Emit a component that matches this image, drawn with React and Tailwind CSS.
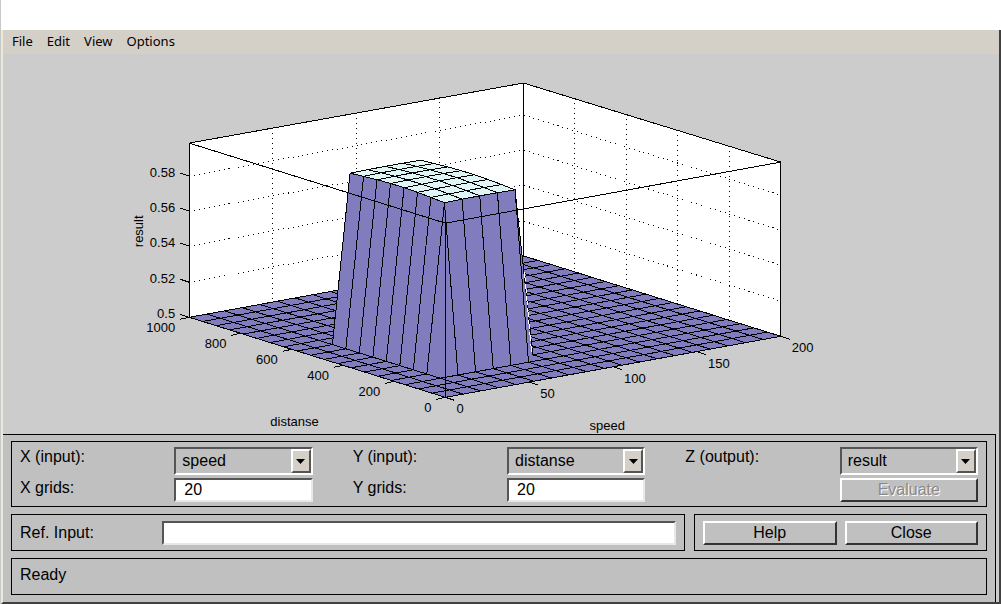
import React, { useState } from 'react';

// Screen coordinates of the axes box
const FRONT = [445, 397];
const LEFT = [189, 317];
const RIGHT = [780, 336];
const BACK = [523, 256];
const BOX_H = 174;
const CELLS = 19;

const up = ([x, y], h) => [x, y - h];
const mix = (a, b, t) => [a[0] + (b[0] - a[0]) * t, a[1] + (b[1] - a[1]) * t];
const pts = (list) => list.map(([x, y]) => `${Math.round(x * 10) / 10},${Math.round(y * 10) / 10}`).join(' ');

// Surface height in pixels, i runs along speed, j along distanse
const heightAt = (i, j) => {
  if (i < 3 || i > 7 || j < 4 || j > 11) return 0;
  const bulge = Math.sin((Math.PI * (j - 4)) / 7);
  return 168 + 2.4 * bulge + 0.4 * Math.sin((Math.PI * (i - 3)) / 4);
};

const vertex = (i, j) => {
  const sx = (RIGHT[0] - FRONT[0]) / CELLS;
  const sy = (RIGHT[1] - FRONT[1]) / CELLS;
  const dx = (LEFT[0] - FRONT[0]) / CELLS;
  const dy = (LEFT[1] - FRONT[1]) / CELLS;
  return [FRONT[0] + sx * i + dx * j, FRONT[1] + sy * i + dy * j - heightAt(i, j)];
};

const buildFaces = () => {
  const faces = [];
  for (let s = 2 * (CELLS - 1); s >= 0; s--) {
    for (let i = 0; i < CELLS; i++) {
      const j = s - i;
      if (j < 0 || j >= CELLS) continue;
      const flatTop = i >= 3 && i < 7 && j >= 4 && j < 11;
      faces.push({
        id: `${i}-${j}`,
        fill: flatTop ? '#e0f5f5' : '#807cbe',
        points: pts([vertex(i, j), vertex(i + 1, j), vertex(i + 1, j + 1), vertex(i, j + 1)]),
      });
    }
  }
  return faces;
};

const faces = buildFaces();

const zTicks = [
  { label: '0.5', h: 0 },
  { label: '0.52', h: 35 },
  { label: '0.54', h: 71 },
  { label: '0.56', h: 106 },
  { label: '0.58', h: 141 },
];
const distTicks = ['0', '200', '400', '600', '800', '1000'];
const speedTicks = ['0', '50', '100', '150', '200'];

const Line = ({ a, b, ...rest }) => <line x1={a[0]} y1={a[1]} x2={b[0]} y2={b[1]} {...rest} />;

const SurfacePlot = () => (
  <svg
    viewBox="3 54 995 380"
    className="block w-full h-auto font-['Liberation_Sans',Arial,sans-serif] text-[13px]"
    role="img"
    aria-label="Surface plot of result"
  >
    <g shapeRendering="crispEdges" stroke="#000" strokeWidth="1" fill="none">
      <polygon
        points={pts([LEFT, up(LEFT, BOX_H), up(BACK, BOX_H - 1), up(RIGHT, BOX_H), RIGHT, FRONT])}
        fill="#fff"
        stroke="none"
      />

      {/* Dotted grid on the back walls */}
      <g strokeDasharray="1 4">
        {zTicks.slice(1).map(({ label, h }) => (
          <polyline key={label} points={pts([up(LEFT, h), up(BACK, h), up(RIGHT, h)])} />
        ))}
        {[1, 2, 3].map((n) => {
          const p = mix(LEFT, BACK, n / 4);
          return <Line key={n} a={up(p, BOX_H)} b={p} />;
        })}
        {[1, 2, 3, 4].map((n) => {
          const p = mix(BACK, RIGHT, n / 5);
          return <Line key={n} a={up(p, BOX_H)} b={p} />;
        })}
      </g>

      <Line a={up(BACK, BOX_H - 1)} b={BACK} />
      <polyline points={pts([LEFT, up(LEFT, BOX_H), up(BACK, BOX_H - 1), up(RIGHT, BOX_H), RIGHT])} />

      {faces.map((f) => (
        <polygon key={f.id} points={f.points} fill={f.fill} />
      ))}
      <line x1="524" y1="272" x2="531" y2="352" stroke="#fff" strokeDasharray="9 3" />

      {/* Near edges of the box */}
      <polyline points={pts([up(LEFT, BOX_H), up(FRONT, BOX_H), up(RIGHT, BOX_H)])} />
      <Line a={up(FRONT, BOX_H)} b={FRONT} />
      <polyline points={pts([LEFT, FRONT, RIGHT])} />

      {/* Ticks */}
      {zTicks.map(({ label, h }) => (
        <Line key={label} a={up(LEFT, h)} b={[LEFT[0] - 9, LEFT[1] - h - 3]} />
      ))}
      {distTicks.map((label, n) => {
        const p = mix(FRONT, LEFT, n / 5);
        return <Line key={label} a={p} b={[p[0] - 9, p[1] + 2]} />;
      })}
      {speedTicks.map((label, n) => {
        const p = mix(FRONT, RIGHT, n / 4);
        return <Line key={label} a={p} b={[p[0] + 9, p[1] + 3]} />;
      })}
    </g>

    <g fill="#000">
      {zTicks.map(({ label, h }) => (
        <text key={label} x="175" y={318 - h} textAnchor="end">{label}</text>
      ))}
      {distTicks.map((label, n) => {
        const p = mix(FRONT, LEFT, n / 5);
        return <text key={label} x={p[0] - 14} y={p[1] + 15} textAnchor="end">{label}</text>;
      })}
      {speedTicks.map((label, n) => {
        const p = mix(FRONT, RIGHT, n / 4);
        return <text key={label} x={p[0] + 11} y={p[1] + 16}>{label}</text>;
      })}
      <text x="270" y="426">distanse</text>
      <text x="589" y="430">speed</text>
      <text transform="translate(143 247) rotate(-90)">result</text>
    </g>
  </svg>
);

const Field = ({ id, label, children }) => (
  <>
    <label htmlFor={id} className="leading-5">{label}</label>
    {children}
  </>
);

const Dropdown = ({ id, value, options, onChange }) => (
  <div className="relative h-7 border-2 border-t-[#555] border-l-[#555] border-r-white border-b-white">
    <select
      id={id}
      value={value}
      onChange={(e) => onChange(e.target.value)}
      className="block w-full h-full appearance-none bg-[#c0c0c0] pl-1.5 pr-6 outline-none"
    >
      {options.map((o) => (
        <option key={o} value={o}>{o}</option>
      ))}
    </select>
    <span className="pointer-events-none absolute inset-y-0 right-0 w-5 flex items-center justify-center bg-[#d4d0c8] border-2 border-t-white border-l-white border-r-[#555] border-b-[#555]">
      <svg viewBox="0 0 9 5" className="w-[9px] h-[5px]" aria-hidden="true">
        <path d="M0 0h9L4.5 5z" fill="#000" />
      </svg>
    </span>
  </div>
);

const groupClass = 'grid grid-cols-[154fr_138fr] gap-y-[3px]';
const inputClass =
  'block w-full h-6 min-w-0 bg-white border-2 border-t-[#555] border-l-[#555] border-r-[#e8e8e8] border-b-[#e8e8e8] px-2 outline-none';
const buttonClass =
  'w-full h-6 bg-[#c0c0c0] border-2 border-t-white border-l-white border-r-[#333] border-b-[#333] leading-5';

const App = () => {
  const [xInput, setXInput] = useState('speed');
  const [yInput, setYInput] = useState('distanse');
  const [output, setOutput] = useState('result');
  const [xGrids, setXGrids] = useState('20');
  const [yGrids, setYGrids] = useState('20');
  const [refInput, setRefInput] = useState('');

  return (
    <div className="bg-white pt-[30px] border-l border-[#c8c8c8] text-black">
      <div className="bg-[#ccc] border-l-2 border-l-[#ece9d8] border-r-2 border-r-[#404040] border-b-2 border-b-[#404040]">
        {/* Menu bar */}
        <nav className="flex h-6 items-center gap-3.5 bg-[#d4d0c8] pl-[9px] font-['Noto_Sans',sans-serif] text-[13px]">
          <button type="button">File</button>
          <button type="button">Edit</button>
          <button type="button">View</button>
          <button type="button">Options</button>
        </nav>

        <SurfacePlot />

        {/* Controls */}
        <div className="bg-[#c0c0c0] border-t border-r border-black mr-[3px] pt-1.5 px-2 pb-[7px] space-y-[7px] font-['Liberation_Sans',Arial,sans-serif] text-base">
          <section className="grid grid-cols-3 gap-x-10 border border-black px-2 pt-[5px] pb-1">
            <div className={groupClass}>
              <Field id="x-input" label="X (input):">
                <Dropdown id="x-input" value={xInput} options={['speed', 'distanse']} onChange={setXInput} />
              </Field>
              <Field id="x-grids" label="X grids:">
                <input id="x-grids" className={inputClass} value={xGrids} onChange={(e) => setXGrids(e.target.value)} />
              </Field>
            </div>
            <div className={groupClass}>
              <Field id="y-input" label="Y (input):">
                <Dropdown id="y-input" value={yInput} options={['speed', 'distanse']} onChange={setYInput} />
              </Field>
              <Field id="y-grids" label="Y grids:">
                <input id="y-grids" className={inputClass} value={yGrids} onChange={(e) => setYGrids(e.target.value)} />
              </Field>
            </div>
            <div className={groupClass}>
              <Field id="z-output" label="Z (output):">
                <Dropdown id="z-output" value={output} options={['result']} onChange={setOutput} />
              </Field>
              <button type="button" disabled className={`${buttonClass} col-start-2 text-[#8a8a8a] [text-shadow:1px_1px_#fff]`}>
                Evaluate
              </button>
            </div>
          </section>

          <div className="flex gap-[9px]">
            <section className="flex flex-1 items-center border border-black h-[37px] px-2">
              <label htmlFor="ref-input" className="w-[142px] shrink-0">Ref. Input:</label>
              <input id="ref-input" className={inputClass} value={refInput} onChange={(e) => setRefInput(e.target.value)} />
            </section>
            <section className="flex w-[293px] items-center gap-2 border border-black h-[37px] px-2">
              <button type="button" className={buttonClass}>Help</button>
              <button type="button" className={buttonClass}>Close</button>
            </section>
          </div>

          <section className="border border-black h-[37px] px-2 leading-8">Ready</section>
        </div>
      </div>
    </div>
  );
};

export default App;
